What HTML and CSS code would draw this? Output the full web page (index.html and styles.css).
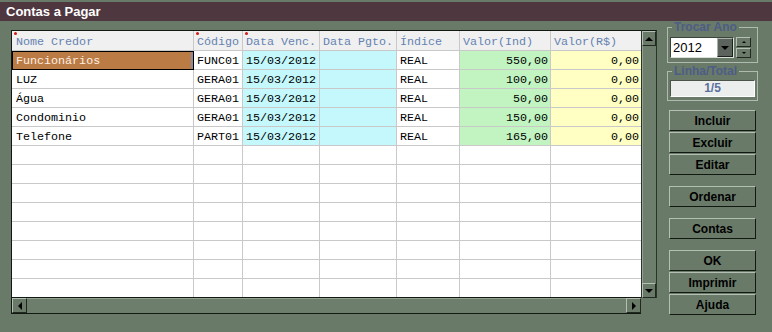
FILE: index.html
```html
<!DOCTYPE html>
<html lang="pt">
<head>
  <meta charset="UTF-8" />
  <title>Contas a Pagar</title>
  <link rel="stylesheet" href="styles.css">
</head>
<body>
  <div class="window">
    <div class="titlebar">Contas a Pagar</div>

    <div class="content">
      <div class="gridframe">
        <div class="grid">
          <div class="row head">
            <div class="cell c1 req">Nome Credor</div>
            <div class="cell c2 req">Código</div>
            <div class="cell c3 req">Data Venc.</div>
            <div class="cell c4">Data Pgto.</div>
            <div class="cell c5">Índice</div>
            <div class="cell c6">Valor(Ind)</div>
            <div class="cell c7">Valor(R$)</div>
          </div>

          <div class="row data">
            <div class="cell c1 selected">Funcionários</div>
            <div class="cell c2">FUNC01</div>
            <div class="cell c3 cyan">15/03/2012</div>
            <div class="cell c4 cyan"></div>
            <div class="cell c5">REAL</div>
            <div class="cell c6 green num">550,00</div>
            <div class="cell c7 yellow num">0,00</div>
          </div>
          <div class="row data">
            <div class="cell c1">LUZ</div>
            <div class="cell c2">GERA01</div>
            <div class="cell c3 cyan">15/03/2012</div>
            <div class="cell c4 cyan"></div>
            <div class="cell c5">REAL</div>
            <div class="cell c6 green num">100,00</div>
            <div class="cell c7 yellow num">0,00</div>
          </div>
          <div class="row data">
            <div class="cell c1">Água</div>
            <div class="cell c2">GERA01</div>
            <div class="cell c3 cyan">15/03/2012</div>
            <div class="cell c4 cyan"></div>
            <div class="cell c5">REAL</div>
            <div class="cell c6 green num">50,00</div>
            <div class="cell c7 yellow num">0,00</div>
          </div>
          <div class="row data">
            <div class="cell c1">Condominio</div>
            <div class="cell c2">GERA01</div>
            <div class="cell c3 cyan">15/03/2012</div>
            <div class="cell c4 cyan"></div>
            <div class="cell c5">REAL</div>
            <div class="cell c6 green num">150,00</div>
            <div class="cell c7 yellow num">0,00</div>
          </div>
          <div class="row data">
            <div class="cell c1">Telefone</div>
            <div class="cell c2">PART01</div>
            <div class="cell c3 cyan">15/03/2012</div>
            <div class="cell c4 cyan"></div>
            <div class="cell c5">REAL</div>
            <div class="cell c6 green num">165,00</div>
            <div class="cell c7 yellow num">0,00</div>
          </div>

          <div class="row data"><div class="cell c1"></div><div class="cell c2"></div><div class="cell c3"></div><div class="cell c4"></div><div class="cell c5"></div><div class="cell c6"></div><div class="cell c7"></div></div>
          <div class="row data"><div class="cell c1"></div><div class="cell c2"></div><div class="cell c3"></div><div class="cell c4"></div><div class="cell c5"></div><div class="cell c6"></div><div class="cell c7"></div></div>
          <div class="row data"><div class="cell c1"></div><div class="cell c2"></div><div class="cell c3"></div><div class="cell c4"></div><div class="cell c5"></div><div class="cell c6"></div><div class="cell c7"></div></div>
          <div class="row data"><div class="cell c1"></div><div class="cell c2"></div><div class="cell c3"></div><div class="cell c4"></div><div class="cell c5"></div><div class="cell c6"></div><div class="cell c7"></div></div>
          <div class="row data"><div class="cell c1"></div><div class="cell c2"></div><div class="cell c3"></div><div class="cell c4"></div><div class="cell c5"></div><div class="cell c6"></div><div class="cell c7"></div></div>
          <div class="row data"><div class="cell c1"></div><div class="cell c2"></div><div class="cell c3"></div><div class="cell c4"></div><div class="cell c5"></div><div class="cell c6"></div><div class="cell c7"></div></div>
          <div class="row data"><div class="cell c1"></div><div class="cell c2"></div><div class="cell c3"></div><div class="cell c4"></div><div class="cell c5"></div><div class="cell c6"></div><div class="cell c7"></div></div>
          <div class="row data"><div class="cell c1"></div><div class="cell c2"></div><div class="cell c3"></div><div class="cell c4"></div><div class="cell c5"></div><div class="cell c6"></div><div class="cell c7"></div></div>
        </div>

        <div class="vscroll">
          <div class="sbtn"><span class="tri up"></span></div>
          <div class="vtrack"></div>
          <div class="sbtn"><span class="tri down"></span></div>
        </div>

        <div class="hscroll">
          <div class="sbtn"><span class="tri left"></span></div>
          <div class="htrack"></div>
          <div class="sbtn"><span class="tri right"></span></div>
        </div>
      </div>

      <div class="side">
        <fieldset class="group">
          <legend>Trocar Ano</legend>
          <div class="year-row">
            <div class="combo">
              <span class="combo-val">2012</span>
              <span class="combo-btn"><span class="tri down"></span></span>
            </div>
            <div class="spin">
              <span class="spin-btn"><span class="tri up small"></span></span>
              <span class="spin-btn"><span class="tri down small"></span></span>
            </div>
          </div>
        </fieldset>

        <fieldset class="group second">
          <legend>Linha/Total</legend>
          <div class="counter">1/5</div>
        </fieldset>

        <div class="stack first">
          <button class="btn">Incluir</button>
          <button class="btn">Excluir</button>
          <button class="btn">Editar</button>
        </div>
        <div class="stack">
          <button class="btn">Ordenar</button>
        </div>
        <div class="stack">
          <button class="btn">Contas</button>
        </div>
        <div class="stack">
          <button class="btn">OK</button>
          <button class="btn">Imprimir</button>
          <button class="btn">Ajuda</button>
        </div>
      </div>
    </div>
  </div>
</body>
</html>
```

FILE: styles.css
```css
:root {
  --win-bg: #6a7a69;
  --title-bg: #4f373f;
  --face-light: #b4c0b4;
  --face-dark: #121812;
  --grid-line: #c9c9c9;
  --head-text: #6582b0;
  --mono: "Liberation Mono", "DejaVu Sans Mono", monospace;
  --sans: "Liberation Sans", Arial, sans-serif;
}

* { box-sizing: border-box; }

body {
  margin: 0;
  width: 772px;
  height: 332px;
  overflow: hidden;
  background: var(--win-bg);
  font-family: var(--sans);
}

.titlebar {
  margin-top: 2px;
  height: 19px;
  padding-left: 6px;
  background: var(--title-bg);
  color: #fff;
  font: bold 13px/19px var(--sans);
}

.content {
  display: flex;
  padding-left: 11px;
}

/* grid + scrollbars */
.gridframe {
  margin-top: 9px;
  display: grid;
  grid-template-columns: 630px 16px;
  grid-template-rows: 268px 16px;
}

.grid {
  height: 268px;
  overflow: hidden;
  background: #fff;
  border-top: 1px solid var(--face-dark);
  border-left: 1px solid var(--face-dark);
  border-bottom: 1px solid var(--face-dark);
  font-family: var(--mono);
  font-size: 11.7px;
}

.row { display: flex; height: 19px; }
.row.head { height: 20px; background: #f0f0f0; color: var(--head-text); }

.cell {
  position: relative;
  height: 100%;
  padding: 0 3px;
  line-height: 20px;
  white-space: nowrap;
  overflow: hidden;
  border-right: 1px solid var(--grid-line);
  border-bottom: 1px solid var(--grid-line);
  color: #000;
}
.head .cell { color: var(--head-text); line-height: 23px; }

.c1 { width: 182px; padding-left: 4px; }
.c2 { width: 49px; }
.c3 { width: 77px; }
.c4 { width: 77px; }
.c5 { width: 63px; }
.c6 { width: 91px; }
.c7 { width: 90px; border-right: none; }

.num { text-align: right; padding-right: 2px; }
.cyan { background: #c4f8fd; }
.green { background: #c2f4c2; }
.yellow { background: #ffffc4; }

.cell.selected {
  background: #ba7b45;
  color: #fcefe2;
  border: 1px solid #000;
  box-shadow: inset -2px 0 0 #8a8aa0;
  line-height: 18px;
  padding-left: 3px;
}

.req::before {
  content: "";
  position: absolute;
  left: 2px;
  top: 1px;
  width: 3px;
  height: 3px;
  border-radius: 50%;
  background: #d01818;
}

.vscroll {
  display: flex;
  flex-direction: column;
  height: 268px;
  border-top: 1px solid var(--face-dark);
  border-left: 1px solid #2a342a;
  border-right: 1px solid #2a342a;
}
.vtrack { flex: 1; background: #6e7e6d; border-left: 1px solid #93a293; }

.hscroll {
  display: flex;
  height: 16px;
  border-left: 1px solid var(--face-dark);
  border-bottom: 1px solid var(--face-dark);
}
.htrack { flex: 1; background: #6e7e6d; border-top: 1px solid #93a293; }

.sbtn {
  flex: none;
  width: 15px;
  height: 15px;
  display: flex;
  align-items: center;
  justify-content: center;
  background: var(--win-bg);
  border: 1px solid;
  border-color: var(--face-light) #202820 #202820 var(--face-light);
}
.vscroll .sbtn { width: 14px; }

.tri { width: 0; height: 0; border-style: solid; border-color: transparent; }
.tri.up { border-width: 0 4px 4px; border-bottom-color: #000; }
.tri.down { border-width: 4px 4px 0; border-top-color: #000; }
.tri.left { border-width: 4px 4px 4px 0; border-right-color: #000; }
.tri.right { border-width: 4px 0 4px 4px; border-left-color: #000; }
.tri.small.up { border-width: 0 2px 2px; }
.tri.small.down { border-width: 2px 2px 0; }

/* right panel */
.side {
  width: 91px;
  margin-left: 10px;
  display: flex;
  flex-direction: column;
}

.group {
  margin: 0;
  padding: 4px 2px 4px;
  border: 1px solid #aebbae;
  min-width: 0;
}
.group legend {
  margin-left: 2px;
  padding: 0 2px;
  font: bold 12px/12px var(--sans);
  color: #4d5d86;
}
.group.second { margin-top: 2px; padding: 3px 2px 3px; }

.year-row { display: flex; gap: 2px; align-items: center; }

.combo {
  width: 64px;
  height: 21px;
  display: flex;
  background: #fff;
  border: 1px solid;
  border-color: #3a443a #d8e0d8 #d8e0d8 #3a443a;
}
.combo-val { flex: 1; padding-left: 2px; font: 13px/19px var(--sans); color: #000; }
.combo-btn {
  width: 16px;
  display: flex;
  align-items: center;
  justify-content: center;
  background: #5c635c;
  border: 1px solid;
  border-color: #a8b0a8 #1c201c #1c201c #a8b0a8;
}

.spin { display: flex; flex-direction: column; gap: 1px; }
.spin-btn {
  width: 15px;
  height: 10px;
  display: flex;
  align-items: center;
  justify-content: center;
  border: 1px solid;
  border-color: var(--face-light) #202820 #202820 var(--face-light);
}

.counter {
  width: 85px;
  height: 17px;
  background: #eceeee;
  border: 1px solid;
  border-color: #4a544a #ffffff #ffffff #4a544a;
  text-align: center;
  font: bold 12px/15px var(--sans);
  color: #5a6e9c;
}

.stack { display: flex; flex-direction: column; gap: 1px; margin-top: 11px; }
.stack.first { margin-top: 9px; }

.btn {
  width: 87px;
  height: 21px;
  margin-left: 2px;
  padding: 0;
  background: var(--win-bg);
  border: 1px solid;
  border-color: var(--face-light) var(--face-dark) var(--face-dark) var(--face-light);
  font: bold 12px var(--sans);
  color: #000;
}
```
